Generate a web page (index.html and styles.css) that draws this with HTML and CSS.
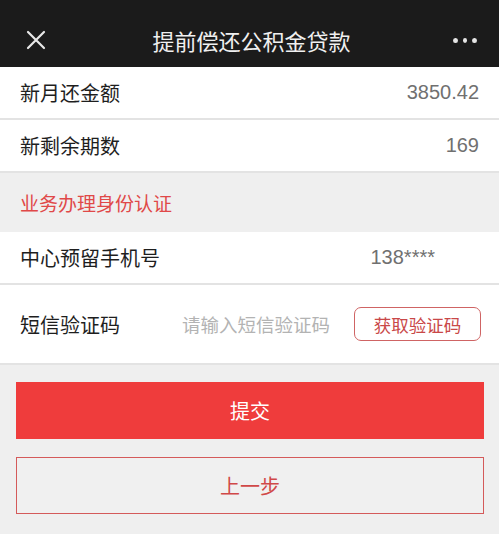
FILE: index.html
```html
<!DOCTYPE html>
<html lang="zh">
<head>
<meta charset="utf-8">
<title>提前偿还公积金贷款</title>
<link rel="stylesheet" href="styles.css">
</head>
<body>
<header class="nav">
  <span class="nav-close">
    <svg width="20" height="20" viewBox="0 0 20 20"><path d="M2 2 L18 18 M18 2 L2 18" stroke="#e8e8e8" stroke-width="2.2" stroke-linecap="round" fill="none"/></svg>
  </span>
  <h1 class="nav-title">提前偿还公积金贷款</h1>
  <span class="nav-more"><i></i><i></i><i></i></span>
</header>
<section class="list">
  <div class="row"><span class="label">新月还金额</span><span class="value">3850.42</span></div>
  <div class="row"><span class="label">新剩余期数</span><span class="value">169</span></div>
</section>
<div class="section-title">业务办理身份认证</div>
<section class="list">
  <div class="row"><span class="label">中心预留手机号</span><span class="value phone">138****</span></div>
  <div class="row row-tall">
    <span class="label label-fixed">短信验证码</span>
    <span class="placeholder">请输入短信验证码</span>
    <button class="code-btn">获取验证码</button>
  </div>
</section>
<div class="actions">
  <button class="btn btn-primary">提交</button>
  <button class="btn btn-outline">上一步</button>
</div>
</body>
</html>
```
FILE: styles.css
```css
* { box-sizing: border-box; }
html, body { margin: 0; padding: 0; }
body {
  background: #efefef;
  font-family: "Liberation Sans", "Noto Sans CJK SC", sans-serif;
  width: 499px;
  height: 534px;
  overflow: hidden;
}
.nav {
  height: 67px;
  background: #1b1b1b;
  padding: 13px 22px 0 26px;
  display: flex;
  align-items: center;
  justify-content: space-between;
}
.nav-close { width: 20px; height: 20px; display: flex; }
.nav-title {
  margin: 0;
  font-size: 22px;
  font-weight: normal;
  color: #f0f0f0;
  letter-spacing: 0;
  padding-left: 4px;
}
.nav-more { display: flex; gap: 5px; width: 24px; }
.nav-more i { width: 5px; height: 5px; border-radius: 50%; background: #e6e6e6; display: block; }
.list { background: #fff; }
.row {
  height: 53px;
  padding: 0 20px;
  border-bottom: 2px solid #e3e3e3;
  display: flex;
  align-items: center;
  font-size: 20px;
}
.label { color: #1e1e1e; }
.value { margin-left: auto; color: #707070; }
.value.phone { margin-right: 44px; }
.row-tall { height: 80px; padding-right: 18px; }
.label-fixed { width: 162px; flex: none; }
.placeholder { font-size: 18.5px; color: #b3b3b3; flex: 1; }
.code-btn {
  width: 127px;
  height: 34px;
  border: 1.5px solid #cf6464;
  border-radius: 7px;
  background: #fff;
  color: #c94848;
  font-family: inherit;
  font-size: 17.5px;
  padding: 0;
}
.section-title {
  height: 59px;
  display: flex;
  align-items: center;
  padding: 0 20px;
  font-size: 19px;
  color: #e04848;
}
.actions {
  padding: 17px 15px 0 16px;
  display: flex;
  flex-direction: column;
  gap: 18px;
}
.btn {
  height: 57px;
  font-family: inherit;
  font-size: 20px;
  border-radius: 0;
  padding: 0;
}
.btn-primary { background: #ef3c3c; color: #fff; border: none; }
.btn-outline { background: #f0f0f0; color: #d04848; border: 1.5px solid #d45a5a; }
```
